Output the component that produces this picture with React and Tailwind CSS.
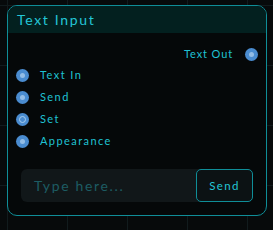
import React from 'react'

const inputs = [
  { id: 'text', label: 'Text In' },
  { id: 'send', label: 'Send' },
  { id: 'set', label: 'Set', ring: true },
  { id: 'appearance', label: 'Appearance' },
]

function Port({ ring }) {
  return (
    <div className="w-[13px] h-[13px] rounded-full bg-[#4a8cd0] flex items-center justify-center shrink-0">
      {ring ? (
        <div className="w-[7px] h-[7px] rounded-full border-[1.5px] border-[#a9cdef]" />
      ) : (
        <div className="w-[5px] h-[5px] rounded-full bg-[#93bde6]" />
      )}
    </div>
  )
}

export default function App() {
  return (
    <div
      className="w-[273px] h-[230px] bg-[#070a0b] bg-[linear-gradient(#111b1d_1px,transparent_1px),linear-gradient(90deg,#111b1d_1px,transparent_1px)] bg-[size:60px_60px] bg-[position:7px_5px] pt-[5px] pl-[7px]"
      style={{ fontFamily: 'Lato, "Open Sans", sans-serif' }}
    >
      <div className="w-[260px] h-[211px] rounded-[10px] border border-[#0f8e98] bg-[#050809] overflow-hidden flex flex-col">
        {/* Header */}
        <div className="h-[27px] bg-[#03201f] flex items-center pl-[9px] shrink-0">
          <span className="text-[14px] tracking-[0.12em] text-[#23c6d6]">Text Input</span>
        </div>

        {/* Output */}
        <div className="flex items-center justify-end gap-[12px] pr-[8px] mt-[15px] h-[13px]">
          <span className="text-[11px] tracking-[0.08em] text-[#1fc2d3]">Text Out</span>
          <Port />
        </div>

        {/* Inputs */}
        <div className="flex flex-col gap-[9px] pl-[8px] mt-[8px]">
          {inputs.map((item) => (
            <div key={item.id} className="flex items-center gap-[11px] h-[13px]">
              <Port ring={item.ring} />
              <span className="text-[11px] tracking-[0.13em] text-[#1fc2d3]">{item.label}</span>
            </div>
          ))}
        </div>

        {/* Text field */}
        <div className="mx-[13px] mt-[21px] h-[33px] rounded-[6px] bg-[#111719] flex items-center">
          <span className="flex-1 pl-[13px] text-[14px] tracking-[0.12em] text-[#1d5c63]">Type here...</span>
          <button className="w-[57px] h-[33px] rounded-[5px] border border-[#0f8e98] bg-[#0c1214] text-[11.5px] tracking-[0.12em] text-[#23c6d6]">
            Send
          </button>
        </div>
      </div>
    </div>
  )
}
